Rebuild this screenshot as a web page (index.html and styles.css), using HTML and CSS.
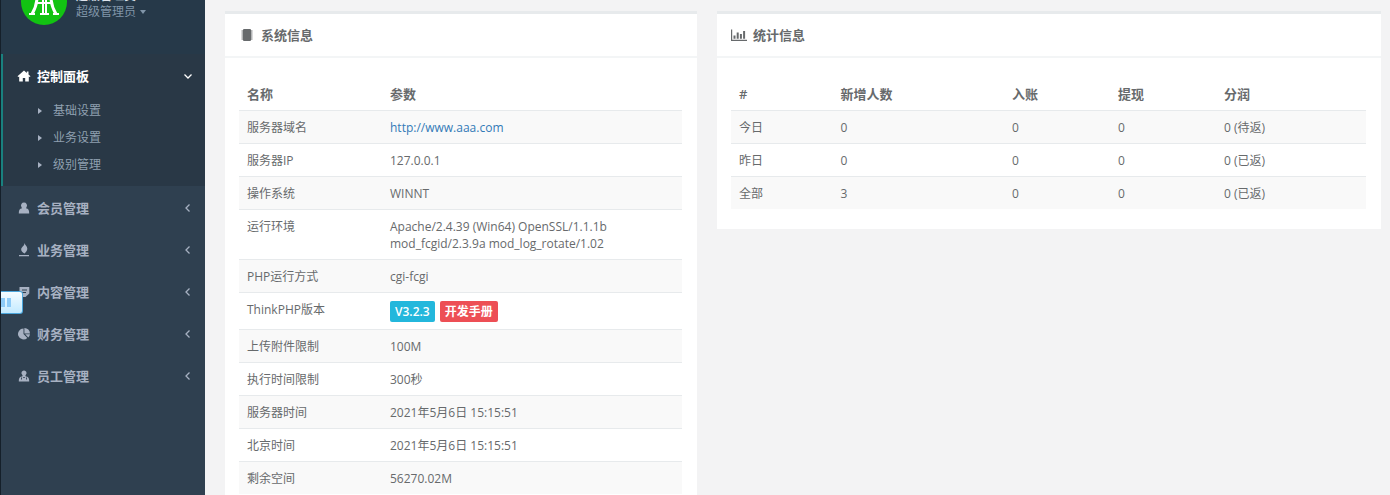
FILE: index.html
```html
<!DOCTYPE html>
<html lang="zh-CN">
<head>
<meta charset="utf-8">
<title>控制面板</title>
<link rel="stylesheet" href="styles.css">
</head>
<body>
<div class="layout">
  <nav class="sidebar">
    <header class="profile">
      <svg class="avatar" viewBox="0 0 46 46" aria-hidden="true">
        <circle cx="23" cy="23" r="23" fill="#12c312"/>
        <g fill="none" stroke="#fff" stroke-width="2">
          <path d="M22 8v27M25 8v27M19 35h9M16 24h14"/>
          <path stroke-width="3" d="M16 18c0 8-2 12-5 17M30 18c0 8 2 12 5 17"/>
          <path d="M8 35h6M32 35h6"/>
        </g>
      </svg>
      <div class="who">
        <strong class="user">超级管理员</strong>
        <button class="role" type="button">超级管理员 <i class="caret"></i></button>
      </div>
    </header>
    <ul class="menu">
      <li class="item open">
        <a class="link" href="#">
          <svg class="icon" viewBox="0 0 14 14"><path d="M7 1.500l2.800 2.400V2.500h1.700v2.900L13.500 7.200l-.8.900-.9-.7V12.500H8.200V9H5.800v3.500H2.200V7.400l-.9.700-.8-.9z"/></svg>
          <span>控制面板</span>
          <svg class="arrow" viewBox="0 0 10 10"><path d="M1.500 3.500L5 7l3.500-3.500"/></svg>
        </a>
        <ul class="submenu">
          <li><a class="sublink" href="#"><i class="tri"></i>基础设置</a></li>
          <li><a class="sublink" href="#"><i class="tri"></i>业务设置</a></li>
          <li><a class="sublink" href="#"><i class="tri"></i>级别管理</a></li>
        </ul>
      </li>
      <li class="item">
        <a class="link" href="#">
          <svg class="icon" viewBox="0 0 14 14"><path d="M7 1.500a3 3 0 0 1 2.600 4.500L9 7.200c2.500.3 3.200 2 3.200 5.300H1.800C1.800 9.200 2.500 7.500 5 7.200L4.400 6A3 3 0 0 1 7 1.500z"/></svg>
          <span>会员管理</span>
          <svg class="arrow" viewBox="0 0 10 10"><path d="M6.500 1.500L3 5l3.500 3.500"/></svg>
        </a>
      </li>
      <li class="item">
        <a class="link" href="#">
          <svg class="icon" viewBox="0 0 14 14"><path d="M7.500 0c.5 2 2.800 3.200 2.800 5.800 0 2-1.300 3.100-2.600 4.700C5.500 9.500 4 8 4.200 6.200 4.500 3.800 7.500 3 7.500 0zM2 12h10v1.300H2z"/></svg>
          <span>业务管理</span>
          <svg class="arrow" viewBox="0 0 10 10"><path d="M6.500 1.500L3 5l3.500 3.500"/></svg>
        </a>
      </li>
      <li class="item">
        <a class="link" href="#">
          <svg class="icon" viewBox="0 0 14 14"><path d="M2.500 2h9.800v6.500L8.500 12H2.500z"/><path d="M5 5h5M5 7.500h4" stroke="#2f4050"/></svg>
          <span>内容管理</span>
          <svg class="arrow" viewBox="0 0 10 10"><path d="M6.500 1.500L3 5l3.500 3.500"/></svg>
        </a>
      </li>
      <li class="item">
        <a class="link" href="#">
          <svg class="icon" viewBox="0 0 14 14"><path d="M6.500 1.500V7l3.800 4A5.500 5.500 0 1 1 6.500 1.500zM7.400 1a5.500 5.500 0 0 1 5.600 5.400H7.400zM8.200 7.200h4.800a5.500 5.500 0 0 1-1.700 3.200z"/></svg>
          <span>财务管理</span>
          <svg class="arrow" viewBox="0 0 10 10"><path d="M6.500 1.500L3 5l3.500 3.500"/></svg>
        </a>
      </li>
      <li class="item">
        <a class="link" href="#">
          <svg class="icon" viewBox="0 0 14 14"><path d="M7 1.500a2.500 2.500 0 0 1 1.800 4.300L8.300 7c.5.600 1.200.5 2 .8 1.500.7 1.900 2.200 1.900 4.700H1.800c0-2.500.4-4 1.900-4.700.8-.3 1.500-.2 2-.8l-.5-1.200A2.500 2.500 0 0 1 7 1.500z"/><path d="M4.500 8.500v2M9.500 8.500v2M6.200 8.500h1.600" stroke="#2f4050" stroke-width=".9"/></svg>
          <span>员工管理</span>
          <svg class="arrow" viewBox="0 0 10 10"><path d="M6.500 1.500L3 5l3.500 3.500"/></svg>
        </a>
      </li>
    </ul>
    <div class="float-tab"><i></i><i></i></div>
  </nav>

  <main class="content">
    <section class="card card-system">
      <h2 class="card-title">
        <svg class="title-icon" viewBox="0 0 16 14"><rect x="4" y="1" width="8" height="12" rx="1"/><path d="M2.500 3h1.500M2.500 5h1.500M2.500 7h1.500M2.500 9h1.500M2.500 11h1.500M12 3h1.500M12 5h1.500M12 7h1.500M12 9h1.500M12 11h1.500" stroke="currentColor"/></svg>
        系统信息
      </h2>
      <div class="card-body">
        <table class="table table-system">
          <thead><tr><th>名称</th><th>参数</th></tr></thead>
          <tbody>
            <tr><td>服务器域名</td><td><a class="url" href="#">http://www.aaa.com</a></td></tr>
            <tr><td>服务器IP</td><td>127.0.0.1</td></tr>
            <tr><td>操作系统</td><td>WINNT</td></tr>
            <tr><td>运行环境</td><td>Apache/2.4.39 (Win64) OpenSSL/1.1.1b mod_fcgid/2.3.9a mod_log_rotate/1.02</td></tr>
            <tr><td>PHP运行方式</td><td>cgi-fcgi</td></tr>
            <tr><td>ThinkPHP版本</td><td><div class="tags"><span class="tag tag-info">V3.2.3</span><a class="tag tag-danger" href="#">开发手册</a></div></td></tr>
            <tr><td>上传附件限制</td><td>100M</td></tr>
            <tr><td>执行时间限制</td><td>300秒</td></tr>
            <tr><td>服务器时间</td><td>2021年5月6日 15:15:51</td></tr>
            <tr><td>北京时间</td><td>2021年5月6日 15:15:51</td></tr>
            <tr><td>剩余空间</td><td>56270.02M</td></tr>
          </tbody>
        </table>
      </div>
    </section>

    <section class="card card-stats">
      <h2 class="card-title">
        <svg class="title-icon" viewBox="0 0 16 14"><path d="M0 1.500h1.200v10.300H16V13H0zM2.500 7.500h2v3.300h-2zM5.700 4.500h2v6.300h-2zM8.900 6h2v4.800h-2zM12.100 3h2v7.800h-2z"/></svg>
        统计信息
      </h2>
      <div class="card-body">
        <table class="table table-stats">
          <thead><tr><th>#</th><th>新增人数</th><th>入账</th><th>提现</th><th>分润</th></tr></thead>
          <tbody>
            <tr><td>今日</td><td>0</td><td>0</td><td>0</td><td>0 (待返)</td></tr>
            <tr><td>昨日</td><td>0</td><td>0</td><td>0</td><td>0 (已返)</td></tr>
            <tr><td>全部</td><td>3</td><td>0</td><td>0</td><td>0 (已返)</td></tr>
          </tbody>
        </table>
      </div>
    </section>
  </main>
</div>
</body>
</html>
```
FILE: styles.css
```css
* { box-sizing: border-box; }

body {
  margin: 0;
  overflow: hidden;
  background: #f3f3f4;
  color: #676a6c;
  font: 12px/17px "Open Sans", "Noto Sans CJK SC", sans-serif;
}

a { color: inherit; text-decoration: none; }
ul { margin: 0; padding: 0; list-style: none; }

.layout { display: flex; height: 100vh; }

/* Sidebar */
.sidebar {
  position: relative;
  flex: none;
  width: 205px;
  overflow: hidden;
  border-left: 1px solid #15202a;
  background: #2f4050;
  color: #a7b1c2;
}

.profile {
  display: flex;
  gap: 9px;
  height: 75px;
  margin-top: -21px;
  padding-left: 20px;
  background: #263949;
}

.avatar { flex: none; width: 46px; height: 46px; }

.who { display: flex; flex-direction: column; align-items: flex-start; padding-top: 9px; }
.user { color: #dfe4ed; line-height: 16px; }

.role {
  display: flex;
  align-items: center;
  gap: 4px;
  padding: 0;
  border: 0;
  background: none;
  color: #8095a8;
  font: inherit;
  line-height: 16px;
}

.caret {
  border: 3px solid transparent;
  border-top: 4px solid #8095a8;
  border-bottom: 0;
}

.item.open {
  padding-bottom: 9px;
  border-left: 2px solid #19817f;
  background: #293846;
}

.link {
  display: flex;
  align-items: center;
  gap: 6px;
  height: 42px;
  padding: 2px 12px 0 16px;
  font-size: 13px;
  font-weight: 600;
}

.open .link { padding-left: 14px; color: #fff; }

.icon { width: 14px; height: 14px; fill: currentColor; }

.arrow {
  width: 10px;
  height: 10px;
  margin-left: auto;
  fill: none;
  stroke: currentColor;
  stroke-width: 1.3;
}

.sublink {
  display: flex;
  align-items: center;
  gap: 11px;
  height: 27px;
  padding: 2px 0 0 35px;
  color: #8fa0b0;
}

.tri { border: 3px solid transparent; border-left: 4px solid #a7b1c2; border-right: 0; }

/* Docked tab over the left window edge */
.float-tab {
  position: absolute;
  top: 291px;
  left: 0;
  display: flex;
  align-items: center;
  gap: 2px;
  width: 22px;
  height: 23px;
  border: 1px solid #4ba6dc;
  border-left: 0;
  border-radius: 0 3px 3px 0;
  background: linear-gradient(#f4fcff, #c3eaff);
}

.float-tab i { width: 4px; height: 9px; background: #8dcbf7; }

/* Content */
.content {
  display: flex;
  flex: 1;
  align-items: flex-start;
  gap: 20px;
  min-width: 0;
  padding: 11px 9px 0 20px;
}

.card { min-width: 0; border-top: 3px solid #e7eaec; background: #fff; }
.card-system { flex: 472; }
.card-stats { flex: 664; }

.card-title {
  display: flex;
  align-items: center;
  gap: 6px;
  height: 44px;
  margin: 0;
  padding: 0 14px;
  border-bottom: 2px solid #f3f5f6;
  font-size: 13px;
  font-weight: 600;
}

.title-icon { width: 16px; height: 14px; fill: currentColor; }

.card-body { padding: 19px 15px 20px 14px; }

.table { width: 100%; border-collapse: collapse; table-layout: fixed; }

.table th {
  padding: 9px 8px 7px;
  font-size: 13px;
  font-weight: 600;
  text-align: left;
}

.table td { padding: 8px 8px 7px; border-top: 1px solid #e7eaec; vertical-align: top; }
.table tbody tr:nth-child(odd) { background: #f9f9f9; }

.table-system th:first-child { width: 143px; }
.table-stats th:nth-child(1) { width: 16%; }
.table-stats th:nth-child(2) { width: 27%; }
.table-stats th:nth-child(3),
.table-stats th:nth-child(4) { width: 106px; }

.url { color: #337ab7; }

.tags { display: flex; gap: 5px; }
.tag { padding: 2px 5px; border-radius: 2px; color: #fff; font-weight: 600; }
.tag-info { background: #23b7dc; }
.tag-danger { background: #ed4f55; }
```
